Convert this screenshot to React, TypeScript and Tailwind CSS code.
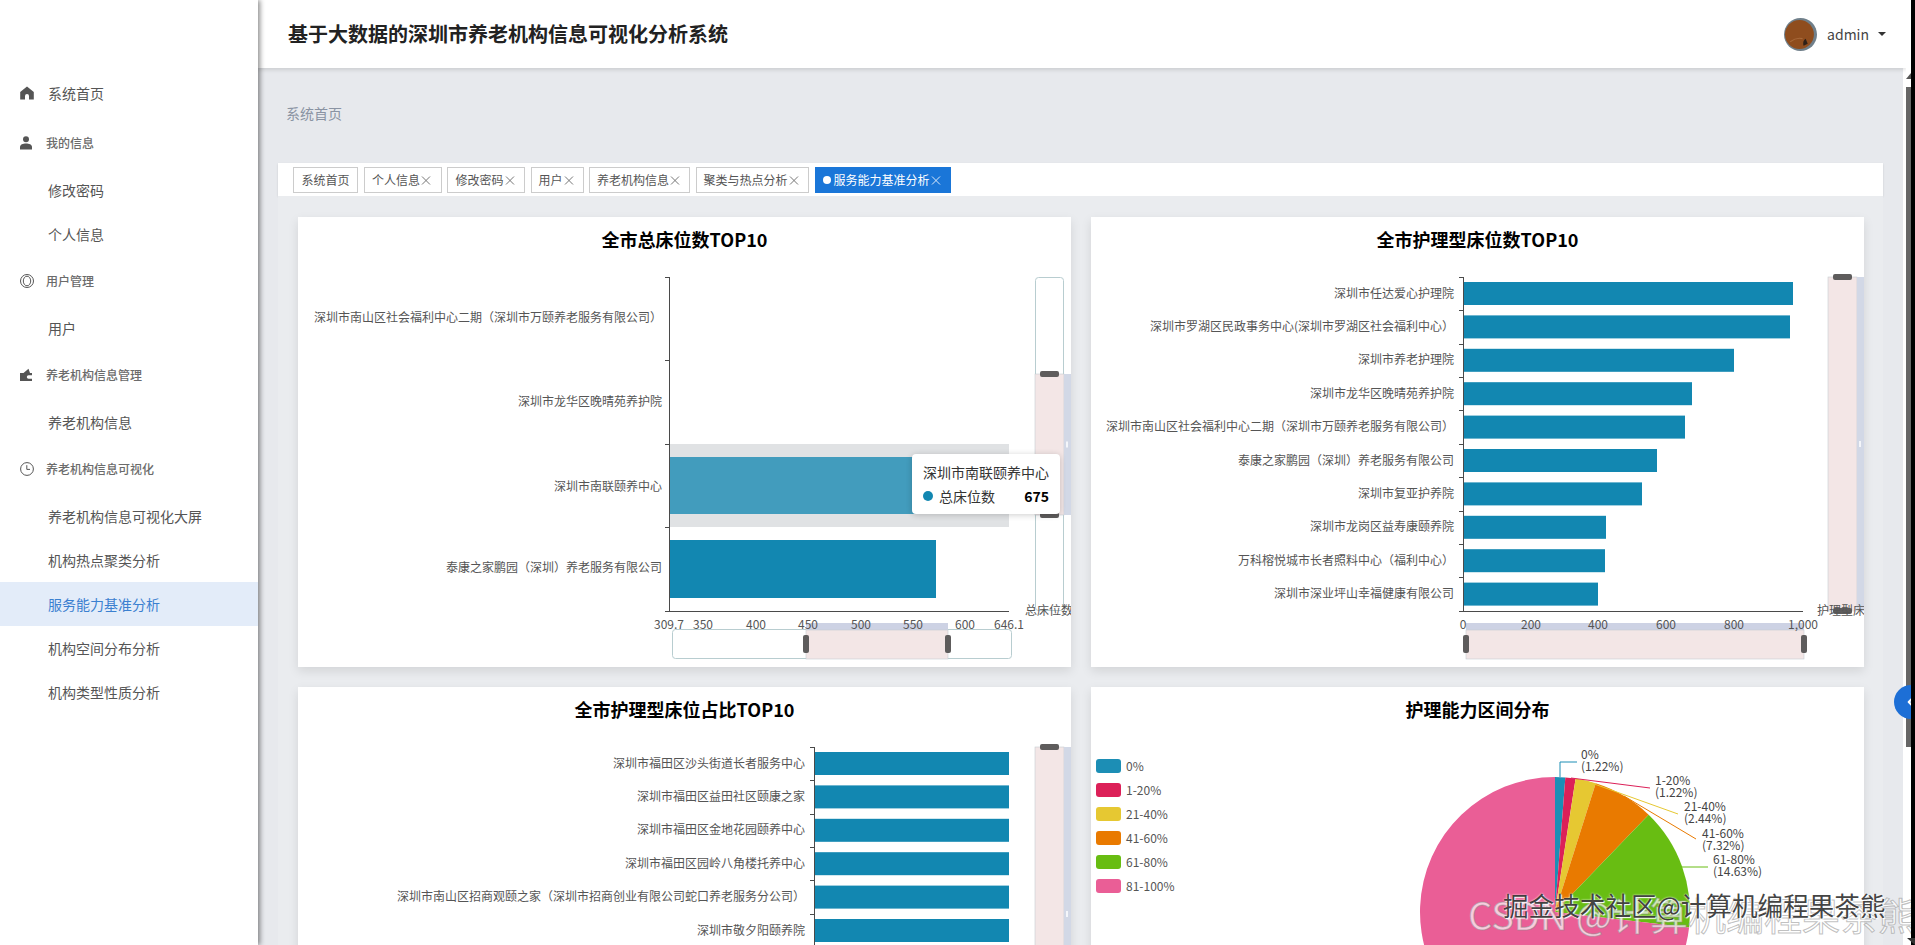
import { ChevronLeft } from 'lucide-react';

const BAR = '#1287b1';
const AXIS = '#4a4a4a';
const LABEL = '#555555';
const PINK = '#f3e6e6';
const BAND = '#d2d8e6';
const HANDLE = '#5e5c5c';
const EDGE = '#b8cdd0';

interface NavGroup {
  title: string;
  icon: 'user' | 'ring' | 'wallet' | 'clock';
  items: string[];
}

const groups: NavGroup[] = [
  { title: '我的信息', icon: 'user', items: ['修改密码', '个人信息'] },
  { title: '用户管理', icon: 'ring', items: ['用户'] },
  { title: '养老机构信息管理', icon: 'wallet', items: ['养老机构信息'] },
  {
    title: '养老机构信息可视化',
    icon: 'clock',
    items: ['养老机构信息可视化大屏', '机构热点聚类分析', '服务能力基准分析', '机构空间分布分析', '机构类型性质分析'],
  },
];

const tabs = [
  { name: '个人信息', w: 'w-[78px]' },
  { name: '修改密码', w: 'w-[78px]' },
  { name: '用户', w: 'w-[53px]' },
  { name: '养老机构信息', w: 'w-[101px]' },
  { name: '聚类与热点分析', w: 'w-[113px]' },
];

const nursingNames = [
  '深圳市任达爱心护理院',
  '深圳市罗湖区民政事务中心(深圳市罗湖区社会福利中心）',
  '深圳市养老护理院',
  '深圳市龙华区晚晴苑养护院',
  '深圳市南山区社会福利中心二期（深圳市万颐养老服务有限公司）',
  '泰康之家鹏园（深圳）养老服务有限公司',
  '深圳市复亚护养院',
  '深圳市龙岗区益寿康颐养院',
  '万科榕悦城市长者照料中心（福利中心）',
  '深圳市深业坪山幸福健康有限公司',
];
const nursingEnds = [702, 699, 643, 601, 594, 566, 551, 515, 514, 507];

const ratioNames = [
  '深圳市福田区沙头街道长者服务中心',
  '深圳市福田区益田社区颐康之家',
  '深圳市福田区金地花园颐养中心',
  '深圳市福田区园岭八角楼托养中心',
  '深圳市南山区招商观颐之家（深圳市招商创业有限公司蛇口养老服务分公司）',
  '深圳市敬夕阳颐养院',
];

const ticks = [14, 47, 81, 114, 147, 181, 214, 248, 281, 314, 348];

const slices = [
  { name: '0%', pct: 1.22, color: '#1c8eb5' },
  { name: '1-20%', pct: 1.22, color: '#dc2058' },
  { name: '21-40%', pct: 2.44, color: '#e6c832' },
  { name: '41-60%', pct: 7.32, color: '#e97a00' },
  { name: '61-80%', pct: 14.63, color: '#68bd12' },
  { name: '81-100%', pct: 73.17, color: '#ea5e96' },
];

const pieLabels = [
  { points: '469,44 469,29 486,29', x: 490, y: 20, text: '0%', pct: '(1.22%)', color: '#1c8eb5' },
  { points: '480,45 559,55', x: 564, y: 46, text: '1-20%', pct: '(1.22%)', color: '#dc2058' },
  { points: '495,48 587,81', x: 593, y: 72, text: '21-40%', pct: '(2.44%)', color: '#e6c832' },
  { points: '533,63 605,106', x: 611, y: 99, text: '41-60%', pct: '(7.32%)', color: '#e97a00' },
  { points: '591,134 617,134', x: 622, y: 125, text: '61-80%', pct: '(14.63%)', color: '#68bd12' },
];

function slicePath(from: number, to: number) {
  const cx = 464;
  const cy = 179;
  const r = 135;
  const a0 = (from / 100) * Math.PI * 2;
  const a1 = (to / 100) * Math.PI * 2;
  const large = to - from > 50 ? 1 : 0;
  const p0 = `${cx + r * Math.sin(a0)} ${cy - r * Math.cos(a0)}`;
  const p1 = `${cx + r * Math.sin(a1)} ${cy - r * Math.cos(a1)}`;
  return `M${cx} ${cy}L${p0}A${r} ${r} 0 ${large} 1 ${p1}Z`;
}

function NavIcon({ name }: { name: NavGroup['icon'] | 'home' }) {
  return (
    <svg width="14" height="14" viewBox="0 0 14 14" className="shrink-0 text-[#555]">
      {name === 'home' && (
        <path fill="currentColor" d="M7 .4 13.8 6v7.6H9V10a2 2 0 0 0-4 0v3.6H.2V6z" />
      )}
      {name === 'user' && (
        <g fill="currentColor">
          <circle cx="6" cy="3.2" r="3" />
          <path d="M0 13.5V11c0-2.6 3-3.6 6-3.6s6 1 6 3.6v2.5z" />
        </g>
      )}
      {name === 'ring' && (
        <g fill="none" stroke="currentColor" strokeWidth="1">
          <circle cx="7" cy="7" r="6.5" />
          <ellipse cx="7" cy="7" rx="3.7" ry="4.8" />
        </g>
      )}
      {name === 'wallet' && (
        <path
          fill="currentColor"
          d="M0 5h3.5L8.5.8 10 5h2v2.2H8.6a1.8 1.8 0 0 0 0 3.6H12V13H0z"
        />
      )}
      {name === 'clock' && (
        <g fill="none" stroke="currentColor" strokeWidth="1">
          <circle cx="7" cy="7" r="6.4" />
          <path d="M6.8 3.2v4.2H10" />
        </g>
      )}
    </svg>
  );
}

function Sidebar() {
  return (
    <aside className="relative z-10 w-[258px] shrink-0 bg-white pt-[72px] shadow-[2px_0_5px_rgba(0,0,0,0.45)]">
      <div className="flex h-11 items-center pb-0.5 pl-5 text-sm text-[#555]">
        <span className="mr-[14px] flex">
          <NavIcon name="home" />
        </span>
        系统首页
      </div>
      {groups.map((g, i) => (
        <div key={g.title} className={i === 0 ? 'mt-[5px]' : 'mt-[3px]'}>
          <div className="flex h-11 items-center pl-5 text-xs font-medium text-[#6b6b6b]">
            <span className="mr-3 flex">
              <NavIcon name={g.icon} />
            </span>
            {g.title}
          </div>
          <div className="mt-[3px]">
            {g.items.map((item) => (
              <div
                key={item}
                className={`flex h-11 items-center pl-12 text-sm ${
                  item === '服务能力基准分析' ? 'bg-[#e3ecf9] text-[#3b80d0]' : 'text-[#555]'
                }`}
              >
                {item}
              </div>
            ))}
          </div>
        </div>
      ))}
    </aside>
  );
}

function TabClose({ color }: { color: string }) {
  return (
    <svg width="13" height="13" viewBox="0 0 13 13" className="shrink-0" stroke={color} strokeWidth="1">
      <path d="M2 2.5l8 8M10 2.5l-8 8" />
    </svg>
  );
}

function TabBar() {
  return (
    <div className="flex h-[33px] items-start gap-[5.5px] bg-white pl-[15px] pt-1 shadow-[0_1px_2px_rgba(0,0,0,0.12)]">
      <div className="flex h-[26px] w-[65px] items-center justify-center border border-[#ccc] text-xs text-[#555]">
        系统首页
      </div>
      {tabs.map((t) => (
        <div
          key={t.name}
          className={`flex h-[26px] items-center justify-center border border-[#ccc] text-xs text-[#555] ${t.w}`}
        >
          {t.name}
          <TabClose color="#777" />
        </div>
      ))}
      <div className="ml-px flex h-[26px] w-[136px] items-center justify-center bg-[#1a76d8] text-xs text-white">
        <span className="mr-px h-2 w-2 rounded-full bg-white" />
        <span className="ml-px">服务能力基准分析</span>
        <TabClose color="#dbe9fa" />
      </div>
    </div>
  );
}

function Card({ title, children }: { title: string; children: React.ReactNode }) {
  return (
    <div className="relative h-[450px] w-[773px] bg-white shadow-[0_4px_10px_rgba(0,0,0,0.1)]">
      <div className="h-[46px] pt-2 text-center text-lg/7 font-bold text-black">{title}</div>
      {children}
    </div>
  );
}

function ChartLabel(props: { x: number; y: number; text: string; anchor?: 'start' | 'middle' | 'end' }) {
  return (
    <text
      x={props.x}
      y={props.y - 1}
      fontSize="12"
      fill={LABEL}
      textAnchor={props.anchor ?? 'end'}
      dominantBaseline="central"
    >
      {props.text}
    </text>
  );
}

function VerticalZoom({ from, to, label }: { from: number; to: number; label: string }) {
  return (
    <>
      <rect x="737.5" y="14.5" width="28" height="333" rx="3" fill="#fff" stroke={EDGE} />
      <rect x="737" y={from} width="29" height={to - from} fill={PINK} stroke="#c6ccd2" strokeWidth="0.6" />
      <rect x="766" y={from} width="7" height={to - from} fill={BAND} />
      <rect x="768" y={(from + to) / 2 - 3} width="2" height="6" fill="#f4f6fa" />
      <rect x="742" y={from - 3} width="19" height="6" rx="2" fill={HANDLE} />
      <rect x="742" y={to - 3} width="19" height="6" rx="2" fill={HANDLE} />
      <ChartLabel x={label.length > 4 ? 726 : 727} y={347} text={label} anchor="start" />
    </>
  );
}

function HorizontalZoom({ x0, x1, from, to }: { x0: number; x1: number; from: number; to: number }) {
  return (
    <>
      <rect x={x0 + 0.5} y="366.5" width={x1 - x0 - 1} height="29" rx="3" fill="#fff" stroke={EDGE} />
      <rect x={from} y="360" width={to - from} height="7" fill="#cdd2e4" />
      <rect x={from} y="367" width={to - from} height="29" fill={PINK} stroke="#c6ccd2" strokeWidth="0.6" />
      <rect x={from - 3} y="372" width="6" height="18" rx="2" fill={HANDLE} />
      <rect x={to - 3} y="372" width="6" height="18" rx="2" fill={HANDLE} />
    </>
  );
}

function TotalChart() {
  const names: [string, number][] = [
    ['深圳市南山区社会福利中心二期（深圳市万颐养老服务有限公司）', 54],
    ['深圳市龙华区晚晴苑养护院', 138],
    ['深圳市南联颐养中心', 223],
    ['泰康之家鹏园（深圳）养老服务有限公司', 304],
  ];
  const xs: [string, number][] = [
    ['309.7', 371],
    ['350', 405],
    ['400', 458],
    ['450', 510],
    ['500', 563],
    ['550', 615],
    ['600', 667],
    ['646.1', 711],
  ];
  return (
    <svg width="773" height="404" className="block">
      <rect x="371" y="181" width="340" height="83" fill="#e0e2e4" />
      <rect x="371" y="194" width="296" height="57" fill="#429cbd" />
      <rect x="371" y="277" width="267" height="58" fill={BAR} />
      <HorizontalZoom x0={374} x1={714} from={508} to={650} />
      <VerticalZoom from={111} to={252} label="总床位数" />
      <path d={`M371.5 14V348M367 348.5H711`} stroke={AXIS} fill="none" />
      {[14, 97, 181, 264].map((y) => (
        <path key={y} d={`M367 ${y + 0.5}H371`} stroke={AXIS} />
      ))}
      {names.map(([t, y]) => (
        <ChartLabel key={t} x={364} y={y} text={t} />
      ))}
      {xs.map(([t, x]) => (
        <ChartLabel key={t} x={x} y={361} text={t} anchor="middle" />
      ))}
    </svg>
  );
}

function NursingChart() {
  const xs: [string, number][] = [
    ['0', 372],
    ['200', 440],
    ['400', 507],
    ['600', 575],
    ['800', 643],
    ['1,000', 712],
  ];
  return (
    <svg width="773" height="404" className="block">
      {nursingEnds.map((end, i) => (
        <rect key={i} x="372" y={19 + 33.4 * i} width={end - 372} height="23" fill={BAR} />
      ))}
      <HorizontalZoom x0={375} x1={713} from={375} to={713} />
      <VerticalZoom from={14} to={348} label="护理型床位数" />
      <path d="M372.5 14V348M368 348.5H712" stroke={AXIS} fill="none" />
      {ticks.slice(0, 10).map((y) => (
        <path key={y} d={`M368 ${y + 0.5}H372`} stroke={AXIS} />
      ))}
      {nursingNames.map((t, i) => (
        <ChartLabel key={t} x={363} y={30 + 33.4 * i} text={t} />
      ))}
      {xs.map(([t, x]) => (
        <ChartLabel key={t} x={x} y={361} text={t} anchor="middle" />
      ))}
    </svg>
  );
}

function RatioChart() {
  return (
    <svg width="773" height="404" className="block">
      {ratioNames.map((t, i) => (
        <g key={t}>
          <rect x="516" y={19 + 33.4 * i} width="195" height="23" fill={BAR} />
          <ChartLabel x={507} y={30 + 33.4 * i} text={t} />
        </g>
      ))}
      <VerticalZoom from={14} to={348} label="护理型床位占比" />
      <path d="M516.5 14V348" stroke={AXIS} />
      {ticks.slice(0, 7).map((y) => (
        <path key={y} d={`M512 ${y + 0.5}H516`} stroke={AXIS} />
      ))}
    </svg>
  );
}

function PieChart() {
  let acc = 0;
  return (
    <svg width="773" height="404" className="block">
      {slices.map((s, i) => {
        const d = slicePath(acc, acc + s.pct);
        acc += s.pct;
        return (
          <g key={s.name}>
            <path d={d} fill={s.color} />
            <rect x="5" y={26 + 24 * i} width="25" height="14" rx="3" fill={s.color} />
            <ChartLabel x={35} y={33 + 24 * i} text={s.name} anchor="start" />
          </g>
        );
      })}
      {pieLabels.map((l) => (
        <g key={l.text}>
          <polyline points={l.points} fill="none" stroke={l.color} strokeWidth="1" />
          <text x={l.x} y={l.y} fontSize="12" fill="#444" dominantBaseline="central">
            {l.text}
          </text>
          <text x={l.x} y={l.y + 12} fontSize="12" fill="#444" dominantBaseline="central">
            {l.pct}
          </text>
        </g>
      ))}
    </svg>
  );
}

export default function App() {
  return (
    <div className="relative flex h-[945px] w-[1915px] overflow-hidden bg-white font-['Noto_Sans_CJK_SC','Noto_Sans',sans-serif]">
      <Sidebar />

      <main className="flex min-h-0 w-[1648px] shrink-0 flex-col overflow-hidden">
        <header className="relative z-[1] flex h-[68px] shrink-0 items-center justify-between bg-white pl-[30px] pr-5 shadow-[0_2px_4px_rgba(0,0,0,0.12)]">
          <h1 className="text-xl font-bold text-[#222]">基于大数据的深圳市养老机构信息可视化分析系统</h1>
          <div className="flex items-center">
            <svg width="33" height="33" viewBox="0 0 32 32">
              <circle cx="16" cy="16" r="16" fill="#6f7f8a" />
              <circle cx="15" cy="16" r="14" fill="#8f4d1e" />
              <path d="M19 27c-1-3 0-6 2-7l2 5z" fill="#2e2018" />
              <path d="M6 23c4-3 8-4 12-3" stroke="#a8693a" fill="none" />
            </svg>
            <span className="ml-[10px] text-sm text-[#444]">admin</span>
            <svg width="8" height="4" viewBox="0 0 8 4" className="ml-[9px]">
              <path d="M0 0h8L4 4z" fill="#333" />
            </svg>
          </div>
        </header>

        <div className="mr-[3px] min-h-0 flex-1 bg-[#e7e9ed] px-5 pt-[35px]">
          <div className="mb-10 pl-2 text-sm/5 text-[#8a93a3]">系统首页</div>
          <TabBar />
          <div className="bg-[#eaecef] pb-5 pl-5 pr-[19px] pt-[21px]">
            <div className="grid grid-cols-[773px_773px] gap-5">
              <Card title="全市总床位数TOP10">
                <TotalChart />
                <div className="absolute left-[614px] top-[237px] h-[60px] w-[148px] rounded bg-white px-[11px] pt-2 text-sm/5 text-[#333] shadow-[0_1px_6px_rgba(0,0,0,0.2)]">
                  <div>深圳市南联颐养中心</div>
                  <div className="mt-1 flex items-center">
                    <span className="mr-[6px] h-[10px] w-[10px] rounded-full bg-[#1287b1]" />
                    总床位数
                    <span className="ml-auto font-bold text-black">675</span>
                  </div>
                </div>
              </Card>
              <Card title="全市护理型床位数TOP10">
                <NursingChart />
              </Card>
              <Card title="全市护理型床位占比TOP10">
                <RatioChart />
              </Card>
              <Card title="护理能力区间分布">
                <PieChart />
              </Card>
            </div>
          </div>
        </div>
      </main>

      <div className="flex w-[5px] shrink-0 flex-col bg-white">
        <svg width="5" height="6" viewBox="0 0 5 6" className="mt-[73px] shrink-0">
          <path d="M5 0v6H0z" fill="#555" />
        </svg>
        <div className="mt-2 h-[660px] bg-[#666]" />
      </div>
      <div className="relative z-30 w-[4px] shrink-0 bg-black" />

      <div className="absolute left-[1894px] top-[685px] z-20 flex h-[34px] w-[34px] items-center rounded-full bg-[#1d6fd6] pl-[8px] text-white">
        <ChevronLeft size={18} strokeWidth={3} />
      </div>
      <svg width="8" height="7" viewBox="0 0 8 7" className="absolute left-[1907px] top-[938px] z-40">
        <path d="M0 0h8v7z" fill="#333" />
      </svg>

      <div className="pointer-events-none absolute left-[1468px] top-[889px] z-[15] whitespace-nowrap text-[38px]/[50px] text-white/70 [-webkit-text-stroke:1px_rgba(140,140,140,0.55)]">
        CSDN @计算机编程果茶熊
      </div>
      <div className="pointer-events-none absolute left-[1503px] top-[886px] z-[16] whitespace-nowrap text-[25.6px]/[38px] text-[#222]/85 [text-shadow:0_0_2px_#fff,1px_1px_1px_#fff]">
        掘金技术社区@计算机编程果茶熊
      </div>
    </div>
  );
}
